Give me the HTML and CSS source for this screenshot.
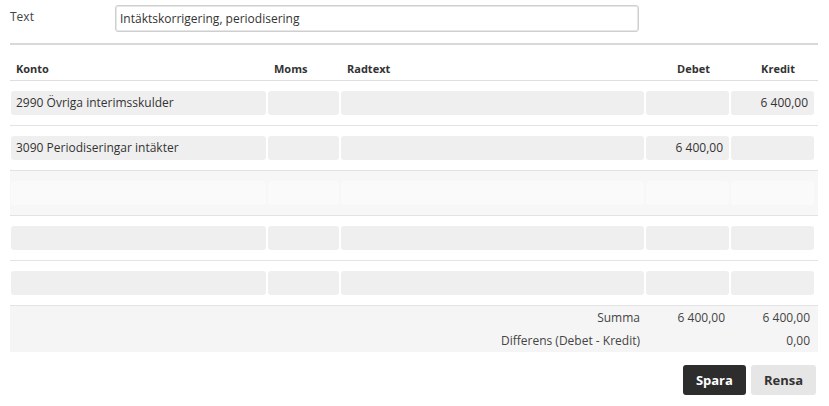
FILE: index.html
```html
<!DOCTYPE html>
<html lang="sv">
<head>
<meta charset="utf-8">
<title>Verifikation</title>
<link rel="stylesheet" href="styles.css">
</head>
<body>
<div class="page">
  <div class="text-row">
    <label class="text-label" for="vtext">Text</label>
    <input class="text-input" id="vtext" type="text" value="Intäktskorrigering, periodisering">
  </div>

  <div class="table">
    <div class="grid head">
      <div class="th">Konto</div>
      <div class="th">Moms</div>
      <div class="th">Radtext</div>
      <div class="th num">Debet</div>
      <div class="th num">Kredit</div>
    </div>

    <div class="grid row">
      <div class="cell">2990 Övriga interimsskulder</div>
      <div class="cell"></div>
      <div class="cell"></div>
      <div class="cell num"></div>
      <div class="cell num">6 400,00</div>
    </div>

    <div class="grid row">
      <div class="cell">3090 Periodiseringar intäkter</div>
      <div class="cell"></div>
      <div class="cell"></div>
      <div class="cell num">6 400,00</div>
      <div class="cell num"></div>
    </div>

    <div class="grid row row-new">
      <div class="cell"></div>
      <div class="cell"></div>
      <div class="cell"></div>
      <div class="cell num"></div>
      <div class="cell num"></div>
    </div>

    <div class="grid row">
      <div class="cell"></div>
      <div class="cell"></div>
      <div class="cell"></div>
      <div class="cell num"></div>
      <div class="cell num"></div>
    </div>

    <div class="grid row">
      <div class="cell"></div>
      <div class="cell"></div>
      <div class="cell"></div>
      <div class="cell num"></div>
      <div class="cell num"></div>
    </div>

    <div class="summary">
      <div class="grid sum-row">
        <div class="sum-label">Summa</div>
        <div class="sum-val">6 400,00</div>
        <div class="sum-val">6 400,00</div>
      </div>
      <div class="grid sum-row">
        <div class="sum-label">Differens (Debet - Kredit)</div>
        <div class="sum-val"></div>
        <div class="sum-val">0,00</div>
      </div>
    </div>
  </div>

  <div class="actions">
    <button class="btn btn-primary" type="button">Spara</button>
    <button class="btn btn-secondary" type="button">Rensa</button>
  </div>
</div>
</body>
</html>
```

FILE: styles.css
```css
* {
  box-sizing: border-box;
}

html, body {
  margin: 0;
  padding: 0;
  background: #ffffff;
}

body {
  font-family: "Open Sans", "DejaVu Sans", sans-serif;
  font-size: 12px;
  color: #333333;
}

.page {
  padding: 5px 11px 0 10px;
}

.text-row {
  display: flex;
  align-items: flex-start;
  padding-bottom: 11px;
  border-bottom: 2px solid #d9d9d9;
}

.text-label {
  width: 105px;
  padding-top: 3px;
  line-height: 17px;
  color: #444444;
}

.text-input {
  width: 524px;
  height: 27px;
  margin: 0;
  padding: 0 4px;
  border: 1px solid #cfcfcf;
  box-shadow: inset 0 0 0 1px #e6e6e6;
  border-radius: 3px;
  font-family: inherit;
  font-size: 12px;
  color: #333333;
  background: #ffffff;
  outline: none;
}

.grid {
  display: grid;
  grid-template-columns: 255px 71px 303px 83px 83px;
  column-gap: 2px;
  padding-left: 1px;
}

.head {
  padding-top: 16px;
  padding-bottom: 4px;
  border-bottom: 1px solid #dedede;
}

.th {
  font-size: 11px;
  font-weight: 700;
  line-height: 15px;
  color: #333333;
  padding-left: 5px;
}

.th:nth-child(2),
.th:nth-child(3) {
  padding-left: 6px;
}

.th.num {
  text-align: right;
  padding-right: 19px;
}

.row {
  padding-top: 10px;
  padding-bottom: 10px;
  border-bottom: 1px solid #e3e3e3;
}

.cell {
  height: 24px;
  line-height: 24px;
  background: #efefef;
  border-radius: 3px;
  padding: 0 5px;
  color: #333333;
  white-space: nowrap;
  overflow: hidden;
}

.cell.num {
  text-align: right;
  padding-right: 6px;
}

.row-new {
  background: #f7f7f7;
}

.row-new .cell {
  background: #fafafa;
}

.summary {
  background: #f5f5f5;
}

.sum-row {
  line-height: 23px;
  color: #444444;
}

.sum-label {
  grid-column: 1 / 4;
  text-align: right;
  padding-right: 4px;
}

.sum-val {
  text-align: right;
  padding-right: 4px;
}

.actions {
  display: flex;
  justify-content: flex-end;
  gap: 5px;
  margin-top: 13px;
  padding-right: 2px;
}

.btn {
  height: 30px;
  padding: 0 13px;
  border: none;
  border-radius: 3px;
  font-family: inherit;
  font-size: 13px;
  font-weight: 700;
  cursor: pointer;
}

.btn-primary {
  background: #2d2d2d;
  color: #ffffff;
}

.btn-secondary {
  background: #e6e6e6;
  color: #333333;
}
```
